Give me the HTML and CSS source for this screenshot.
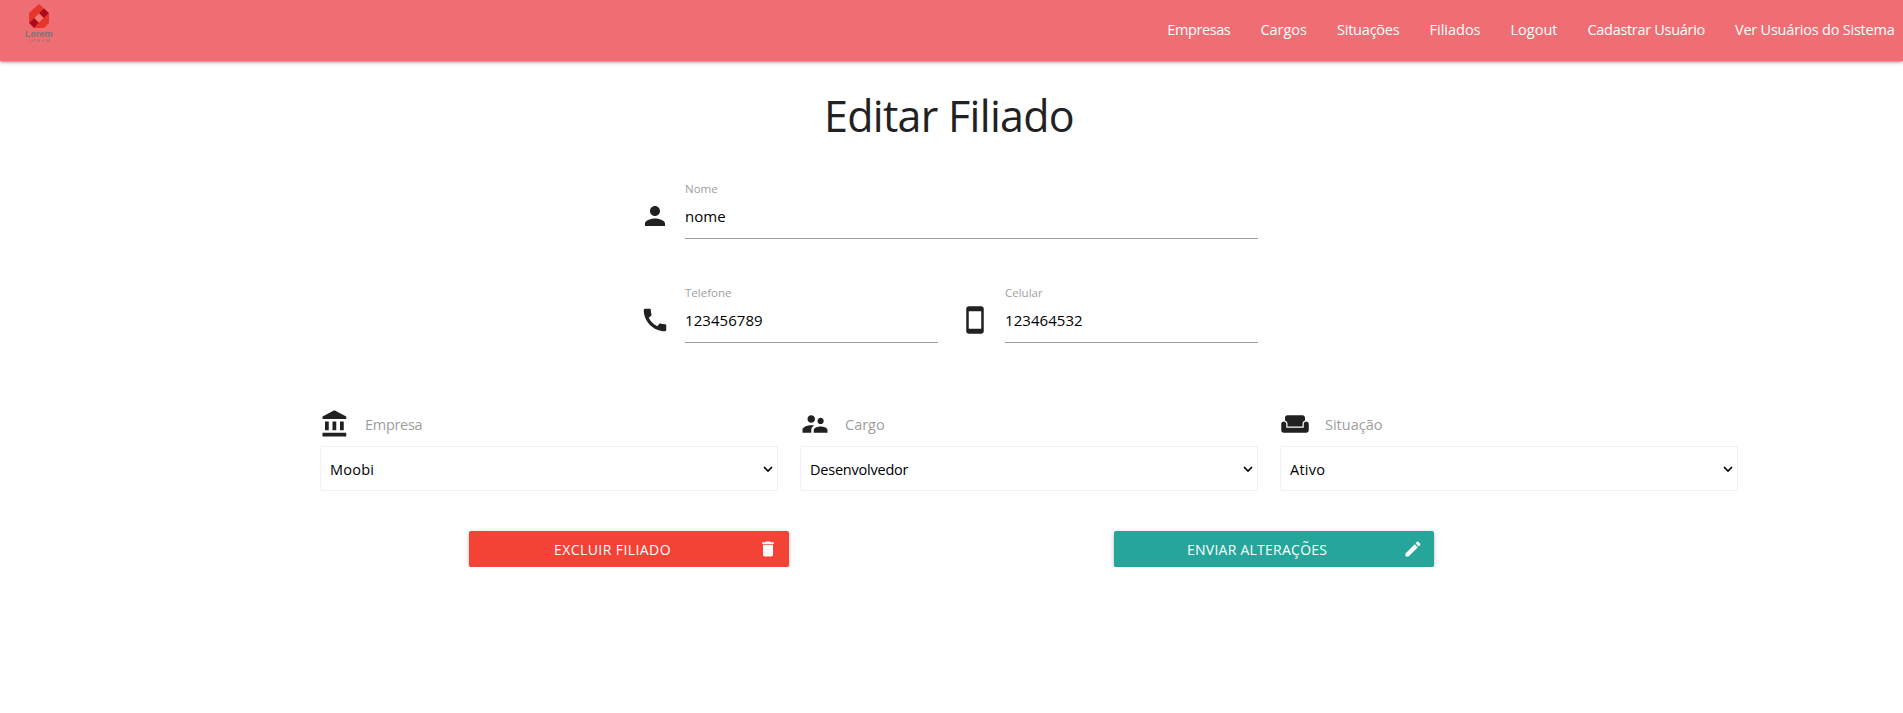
FILE: index.html
```html
<!DOCTYPE html>
<html lang="pt-BR">
<head>
<meta charset="utf-8">
<title>Editar Filiado</title>
<link rel="stylesheet" href="styles.css">
</head>
<body>
<nav class="navbar">
  <svg class="logo" viewBox="0 0 32 44" width="32" height="44">
    <path fill="#e8352b" d="M16 1 26 10v10l-5 5H11l-5-5V10z"/>
    <path fill="#f27a76" d="m16 10.500 4.500 4.500-4.500 4.500-4.500-4.500z"/>
    <path fill="#ad0a1e" d="m21 5.500 4.700 4.500-4.700 4.700-4.700-4.700z"/>
    <path fill="#ad0a1e" d="m11 15.300 4.700 4.700-4.700 4.700L6.300 20z"/>
    <text class="logo-name" x="2" y="34" textLength="27.500" lengthAdjust="spacingAndGlyphs">Lorem</text>
    <text class="logo-sub" x="6.500" y="38.600" textLength="20">IPSUM</text>
  </svg>
  <ul class="menu">
    <li class="tightest">Empresas</li>
    <li>Cargos</li>
    <li class="tight">Situações</li>
    <li>Filiados</li>
    <li>Logout</li>
    <li class="tighter">Cadastrar Usuário</li>
    <li class="tight">Ver Usuários do Sistema</li>
  </ul>
</nav>
<main>
  <h1 class="title">Editar Filiado</h1>
  <form class="form">
    <div class="personal">
      <div class="field wide">
        <svg class="icon" viewBox="0 0 24 24"><path d="M12 12c2.210 0 4-1.790 4-4s-1.790-4-4-4-4 1.790-4 4 1.790 4 4 4zm0 2c-2.670 0-8 1.340-8 4v2h16v-2c0-2.660-5.330-4-8-4z"/></svg>
        <div class="control"><label>Nome</label><div class="value">nome</div></div>
      </div>
      <div class="field">
        <svg class="icon" viewBox="0 0 24 24"><path d="M20.010 15.380c-1.230 0-2.420-.2-3.530-.56-.35-.12-.74-.03-1.010.24l-1.570 1.970c-2.830-1.350-5.480-3.900-6.890-6.830l1.950-1.660c.27-.28.35-.67.24-1.020-.37-1.110-.56-2.300-.56-3.530 0-.54-.45-.99-.99-.99H4.190C3.650 3 3 3.240 3 3.990 3 13.280 10.730 21 20.010 21c.71 0 .99-.63.99-1.180v-3.450c0-.54-.45-.99-.99-.99z"/></svg>
        <div class="control"><label>Telefone</label><div class="value">123456789</div></div>
      </div>
      <div class="field">
        <svg class="icon" viewBox="0 0 24 24"><path d="M17 1.010 7 1c-1.100 0-2 .9-2 2v18c0 1.100.9 2 2 2h10c1.100 0 2-.9 2-2V3c0-1.100-.9-1.990-2-1.990zM17 19H7V5h10v14z"/></svg>
        <div class="control"><label>Celular</label><div class="value">123464532</div></div>
      </div>
    </div>
    <div class="selects">
      <div class="choice">
        <div class="caption"><svg class="icon" viewBox="0 0 24 24"><path d="M4 10v7h3v-7H4zm6 0v7h3v-7h-3zM2 22h19v-3H2v3zm14-12v7h3v-7h-3zm-4.500-9L2 6v2h19V6l-9.500-5z"/></svg><span class="tighter">Empresa</span></div>
        <div class="select"><span class="loose">Moobi</span><svg class="arrow" viewBox="0 0 10 6"><path d="m1 1 4 4 4-4"/></svg></div>
      </div>
      <div class="choice">
        <div class="caption"><svg class="icon" viewBox="0 0 24 24"><path d="M16.500 12c1.380 0 2.490-1.120 2.490-2.500S17.880 7 16.500 7C15.120 7 14 8.120 14 9.500s1.120 2.500 2.500 2.500zM9 11c1.660 0 2.990-1.340 2.990-3S10.660 5 9 5C7.340 5 6 6.340 6 8s1.340 3 3 3zm7.500 3c-1.830 0-5.500.92-5.500 2.750V19h11v-2.250c0-1.830-3.670-2.750-5.500-2.750zM9 13c-2.330 0-7 1.170-7 3.500V19h7v-2.250c0-.85.33-2.340 2.370-3.470C10.500 13.100 9.660 13 9 13z"/></svg><span>Cargo</span></div>
        <div class="select"><span class="tight">Desenvolvedor</span><svg class="arrow" viewBox="0 0 10 6"><path d="m1 1 4 4 4-4"/></svg></div>
      </div>
      <div class="choice">
        <div class="caption"><svg class="icon" viewBox="0 0 24 24"><path d="M21 10c-1.100 0-2 .9-2 2v3H5v-3c0-1.100-.9-2-2-2s-2 .9-2 2v5c0 1.100.9 2 2 2h18c1.100 0 2-.9 2-2v-5c0-1.100-.9-2-2-2zm-3-5H6c-1.100 0-2 .9-2 2v2.150c1.160.41 2 1.510 2 2.820V14h12v-2.030c0-1.300.84-2.400 2-2.820V7c0-1.100-.9-2-2-2z"/></svg><span>Situação</span></div>
        <div class="select"><span class="loose">Ativo</span><svg class="arrow" viewBox="0 0 10 6"><path d="m1 1 4 4 4-4"/></svg></div>
      </div>
    </div>
    <div class="actions">
      <div class="btn danger"><span>EXCLUIR FILIADO</span><svg viewBox="0 0 24 24"><path d="M6 19c0 1.100.9 2 2 2h8c1.100 0 2-.9 2-2V7H6v12zM19 4h-3.500l-1-1h-5l-1 1H5v2h14V4z"/></svg></div>
      <div class="btn submit"><span>ENVIAR ALTERAÇÕES</span><svg viewBox="0 0 24 24"><path d="M3 17.250V21h3.750L17.810 9.940l-3.750-3.750L3 17.250zM20.710 7.040c.39-.39.39-1.020 0-1.410l-2.340-2.340c-.39-.39-1.020-.39-1.410 0l-1.830 1.830 3.750 3.750 1.830-1.830z"/></svg></div>
    </div>
  </form>
</main>
</body>
</html>
```
FILE: styles.css
```css
* { box-sizing: border-box; }
body {
  margin: 0;
  background: #fff;
  color: #212121;
  font-family: "Open Sans", "Noto Sans", sans-serif;
  font-size: 14.500px;
  line-height: 1.5;
}
.navbar {
  display: flex;
  justify-content: space-between;
  height: 61px;
  padding: 3px 8.500px 0 23px;
  background: #ee6e73;
  box-shadow: 0 2px 2px 0 rgba(0,0,0,.14), 0 3px 1px -2px rgba(0,0,0,.12), 0 1px 5px 0 rgba(0,0,0,.2);
}
.logo text { font-family: "Liberation Sans", sans-serif; }
.logo-name { font-size: 9px; font-weight: 700; fill: #78747a; }
.logo-sub { font-size: 4px; fill: #7c6f74; }
.menu {
  display: flex;
  gap: 30px;
  margin: 0;
  padding: 0;
  list-style: none;
  color: #fff;
  line-height: 53px;
  white-space: nowrap;
}
.tight { letter-spacing: -.22px; }
.tighter { letter-spacing: -.3px; }
.tightest { letter-spacing: -.41px; }
.loose { letter-spacing: .25px; }
.title {
  margin: 23px 5px 0 0;
  font-size: 43px;
  font-weight: 400;
  line-height: 64px;
  letter-spacing: -.7px;
  text-align: center;
}
.personal {
  display: grid;
  grid-template-columns: 298px 298px;
  gap: 40px 22px;
  width: 618px;
  margin: 27px 0 0 640px;
}
.field { display: flex; gap: 15px; height: 64px; }
.wide { grid-column: 1 / 3; }
.icon { width: 30px; height: 30px; fill: #212121; flex: none; }
.field .icon { margin-top: 26px; }
.control { flex: 1; padding-top: 5px; border-bottom: 1px solid #9e9e9e; }
.control label { display: block; font-size: 11.500px; line-height: 18px; color: #9e9e9e; }
.value { color: #000; font-size: 15px; line-height: 36px; letter-spacing: .05px; }
.selects {
  display: grid;
  grid-template-columns: repeat(3, 458px);
  gap: 22px;
  margin: 66px 0 0 320px;
}
.caption { display: flex; gap: 15px; height: 37px; color: #9e9e9e; line-height: 32px; }
.select {
  display: flex;
  justify-content: space-between;
  align-items: center;
  height: 45px;
  padding: 0 4px 0 9px;
  border: 1px solid #f2f2f2;
  border-radius: 2px;
  color: #000;
}
.select span { padding-top: 3px; }
.arrow { width: 10px; height: 6px; fill: none; stroke: #000; stroke-width: 1.700; }
.actions { display: flex; gap: 325px; margin: 40px 0 0 469px; }
.btn {
  display: flex;
  justify-content: space-between;
  align-items: center;
  width: 320px;
  height: 36px;
  padding-right: 11px;
  border-radius: 2px;
  color: #fff;
  font-size: 14px;
  box-shadow: 0 2px 2px 0 rgba(0,0,0,.14), 0 3px 1px -2px rgba(0,0,0,.12), 0 1px 5px 0 rgba(0,0,0,.2);
}
.btn svg { width: 20px; height: 20px; fill: #fff; }
.danger { padding-left: 85px; background: #f44336; letter-spacing: .42px; }
.submit { padding-left: 73px; background: #26a69a; letter-spacing: .25px; }
```
